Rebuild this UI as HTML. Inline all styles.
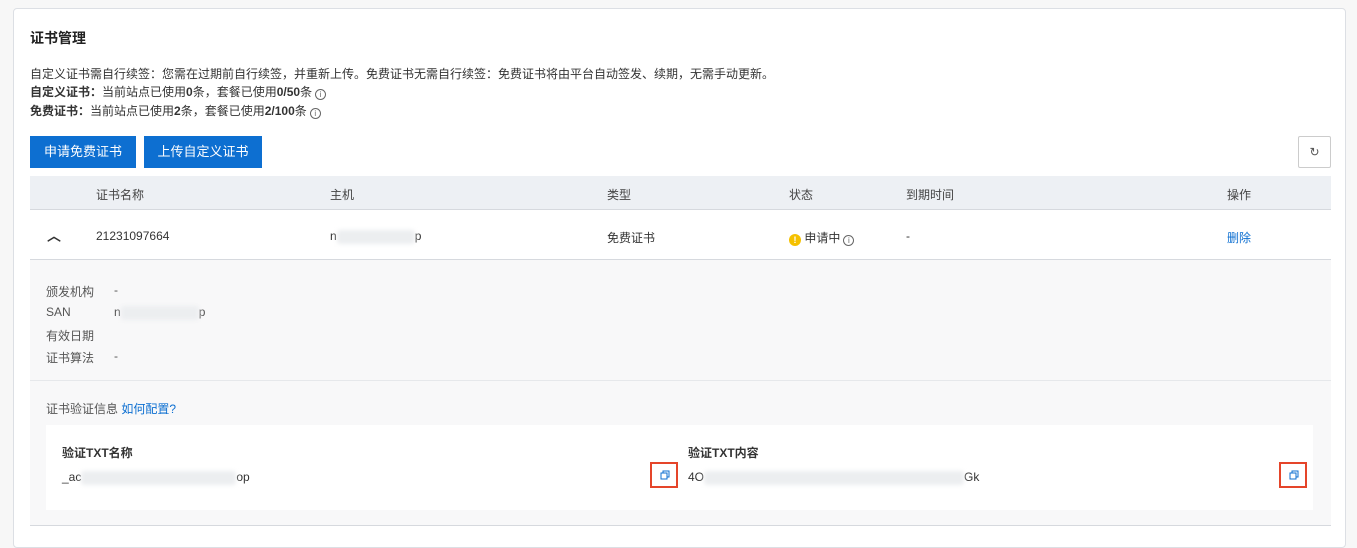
<!DOCTYPE html>
<html><head><meta charset="utf-8"><style>
*{margin:0;padding:0;box-sizing:border-box}
body{width:1357px;height:532px;background:#f7f7f7;font-family:"Liberation Sans","Noto Sans CJK SC",sans-serif;font-size:12px;color:#333;position:relative;overflow:hidden}
.card{position:absolute;left:13px;top:8px;width:1333px;height:540px;background:#fff;border:1px solid #dcdfe4;border-radius:4px}
.a{position:absolute;white-space:nowrap}
.btn{position:absolute;top:136px;height:32px;background:#0d6fd1;color:#fff;font-size:13px;line-height:32px;text-align:center}
.blur{display:inline-block;background:#eceef0;filter:blur(2px);height:14px;vertical-align:middle;border-radius:3px}
.info{display:inline-block;width:11px;height:11px;border:1px solid #666;border-radius:50%;font-size:8px;line-height:9px;text-align:center;vertical-align:-1px;margin-left:3px;color:#666}
.copy{position:absolute;width:28px;height:26px;border:2px solid #e5452a}
</style></head><body>
<div class="card"></div>
<div class="a" style="left:30px;top:28px;font-size:14px;font-weight:bold;color:#222">证书管理</div>
<div class="a" style="left:30px;top:65px">自定义证书需自行续签：您需在过期前自行续签，并重新上传。免费证书无需自行续签：免费证书将由平台自动签发、续期，无需手动更新。</div>
<div class="a" style="left:30px;top:83px"><b>自定义证书：</b>当前站点已使用<b>0</b>条，套餐已使用<b>0/50</b>条<span class="info">i</span></div>
<div class="a" style="left:30px;top:102px"><b>免费证书：</b>当前站点已使用<b>2</b>条，套餐已使用<b>2/100</b>条<span class="info">i</span></div>
<div class="btn" style="left:30px;width:106px">申请免费证书</div>
<div class="btn" style="left:144px;width:118px">上传自定义证书</div>
<div class="a" style="left:1298px;top:136px;width:33px;height:32px;border:1px solid #ccc;border-radius:2px;text-align:center;line-height:30px;font-size:12px;color:#555">↻</div>
<div class="a" style="left:30px;top:176px;width:1301px;height:34px;background:#edf0f4;border-bottom:1px solid #d6d9de"></div>
<div class="a" style="left:96px;top:186px;color:#444">证书名称</div>
<div class="a" style="left:330px;top:186px;color:#444">主机</div>
<div class="a" style="left:607px;top:186px;color:#444">类型</div>
<div class="a" style="left:789px;top:186px;color:#444">状态</div>
<div class="a" style="left:906px;top:186px;color:#444">到期时间</div>
<div class="a" style="left:1227px;top:186px;color:#444">操作</div>
<div class="a" style="left:47px;top:226px;font-size:14px;font-weight:bold">︿</div>
<div class="a" style="left:96px;top:229px;font-size:12px">21231097664</div>
<div class="a" style="left:330px;top:229px;font-size:12px">n<span class="blur" style="width:78px"></span>p</div>
<div class="a" style="left:607px;top:229px">免费证书</div>
<div class="a" style="left:789px;top:229px"><span style="display:inline-block;width:12px;height:12px;border-radius:50%;background:#f5c100;color:#fff;font-size:9px;font-weight:bold;text-align:center;line-height:12px;vertical-align:-1px">!</span> 申请中<span class="info">i</span></div>
<div class="a" style="left:906px;top:229px">-</div>
<div class="a" style="left:1227px;top:229px;color:#0d6fd1">删除</div>
<div class="a" style="left:30px;top:259px;width:1301px;height:267px;background:#f8f8f9;border-top:1px solid #d6d9de;border-bottom:1px solid #d6d9de"></div>
<div class="a" style="left:30px;top:380px;width:1301px;height:1px;background:#e6e8eb"></div>
<div class="a" style="left:46px;top:283px;color:#555">颁发机构</div><div class="a" style="left:114px;top:283px;color:#555">-</div>
<div class="a" style="left:46px;top:305px;color:#555">SAN</div><div class="a" style="left:114px;top:305px;color:#555">n<span class="blur" style="width:78px"></span>p</div>
<div class="a" style="left:46px;top:327px;color:#555">有效日期</div>
<div class="a" style="left:46px;top:349px;color:#555">证书算法</div><div class="a" style="left:114px;top:349px;color:#555">-</div>
<div class="a" style="left:46px;top:400px;color:#555">证书验证信息 <span style="color:#0d6fd1">如何配置?</span></div>
<div class="a" style="left:46px;top:425px;width:1267px;height:85px;background:#fff"></div>
<div class="a" style="left:62px;top:444px;font-weight:bold">验证TXT名称</div>
<div class="a" style="left:62px;top:470px">_ac<span class="blur" style="width:155px"></span>op</div>
<div class="a" style="left:688px;top:444px;font-weight:bold">验证TXT内容</div>
<div class="a" style="left:688px;top:470px">4O<span class="blur" style="width:260px"></span>Gk</div>
<div class="copy" style="left:650px;top:462px"></div>
<div class="copy" style="left:1279px;top:462px"></div>
<svg class="a" style="left:660px;top:470px" width="10" height="10" viewBox="0 0 10 10"><rect x="1" y="3" width="6" height="6" fill="none" stroke="#0d6fd1"/><path d="M3 3V1h6v6H7" fill="none" stroke="#0d6fd1"/></svg>
<svg class="a" style="left:1289px;top:470px" width="10" height="10" viewBox="0 0 10 10"><rect x="1" y="3" width="6" height="6" fill="none" stroke="#0d6fd1"/><path d="M3 3V1h6v6H7" fill="none" stroke="#0d6fd1"/></svg>
</body></html>
